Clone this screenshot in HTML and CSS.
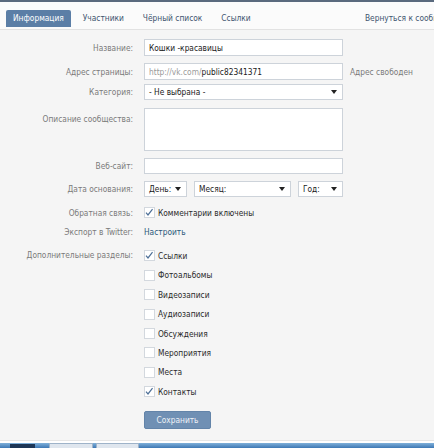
FILE: index.html
```html
<!DOCTYPE html>
<html lang="ru">
<head>
<meta charset="utf-8">
<title>Информация</title>
<link rel="stylesheet" href="styles.css">
</head>
<body>
<div class="topline"></div>
<div class="tabbar">
  <nav class="tabs">
    <span class="tab active">Информация</span>
    <span class="tab">Участники</span>
    <span class="tab">Чёрный список</span>
    <span class="tab">Ссылки</span>
  </nav>
  <div class="back">Вернуться к сообществу</div>
</div>
<main class="form">
  <div class="row r-name">
    <div class="lbl">Название:</div>
    <div class="ctl"><div class="input">Кошки -красавицы</div></div>
  </div>
  <div class="row r-addr">
    <div class="lbl">Адрес страницы:</div>
    <div class="ctl"><div class="input"><span class="muted">http://vk.com/</span>public82341371</div></div>
    <div class="note">Адрес свободен</div>
  </div>
  <div class="row r-cat">
    <div class="lbl">Категория:</div>
    <div class="ctl"><div class="select"><span>- Не выбрана -</span><i class="arrow"></i></div></div>
  </div>
  <div class="row r-desc">
    <div class="lbl top">Описание сообщества:</div>
    <div class="ctl"><div class="textarea"></div></div>
  </div>
  <div class="row r-site">
    <div class="lbl">Веб-сайт:</div>
    <div class="ctl"><div class="input"></div></div>
  </div>
  <div class="row r-date">
    <div class="lbl">Дата основания:</div>
    <div class="ctl dates">
      <div class="select day"><span>День:</span><i class="arrow"></i></div>
      <div class="select month"><span>Месяц:</span><i class="arrow"></i></div>
      <div class="select year"><span>Год:</span><i class="arrow"></i></div>
    </div>
  </div>
  <div class="row r-fb">
    <div class="lbl">Обратная связь:</div>
    <div class="ctl">
      <div class="check"><span class="box on"><svg viewBox="0 0 11 11"><path d="M2.2 5.6 L4.4 8.2 L9.4 1.8"/></svg></span>Комментарии включены</div>
    </div>
  </div>
  <div class="row r-tw">
    <div class="lbl">Экспорт в Twitter:</div>
    <div class="ctl"><span class="link">Настроить</span></div>
  </div>
  <div class="row r-extra">
    <div class="lbl item-h">Дополнительные разделы:</div>
    <div class="ctl list">
      <div class="check item"><span class="box on"><svg viewBox="0 0 11 11"><path d="M2.2 5.6 L4.4 8.2 L9.4 1.8"/></svg></span>Ссылки</div>
      <div class="check item"><span class="box"></span>Фотоальбомы</div>
      <div class="check item"><span class="box"></span>Видеозаписи</div>
      <div class="check item"><span class="box"></span>Аудиозаписи</div>
      <div class="check item"><span class="box"></span>Обсуждения</div>
      <div class="check item"><span class="box"></span>Мероприятия</div>
      <div class="check item"><span class="box"></span>Места</div>
      <div class="check item"><span class="box on"><svg viewBox="0 0 11 11"><path d="M2.2 5.6 L4.4 8.2 L9.4 1.8"/></svg></span>Контакты</div>
    </div>
  </div>
  <div class="row r-save">
    <div class="lbl"></div>
    <div class="ctl"><div class="button">Сохранить</div></div>
  </div>
</main>
<footer class="taskbar">
  <span class="start"></span>
  <span class="task"></span>
  <span class="task"></span>
</footer>
</body>
</html>
```
FILE: styles.css
```css
html, body {
  margin: 0;
  padding: 0;
}
body {
  width: 434px;
  height: 448px;
  overflow: hidden;
  background: #f5f5f5;
  font-family: "DejaVu Sans Condensed", "DejaVu Sans", sans-serif;
  font-stretch: condensed;
  font-size: 8.3px;
  color: #222;
}
.topline {
  height: 2px;
  background: #5a6a7e;
}
.tabbar {
  display: grid;
  grid-template-columns: 365px 1fr;
  align-items: end;
  height: 28px;
  box-sizing: border-box;
  padding: 8px 0 2px 0;
  background: #fbfbfb;
  border-bottom: 1px solid #e2e2e2;
}
.tabs {
  display: flex;
  gap: 5px;
  padding-left: 6px;
}
.tab {
  height: 17px;
  line-height: 17px;
  padding: 0 7px;
  color: #40546f;
  white-space: nowrap;
}
.tab.active {
  background: #5b7ea6;
  color: #fff;
  border-radius: 2px 2px 0 0;
}
.back {
  height: 17px;
  line-height: 17px;
  white-space: nowrap;
  overflow: hidden;
  color: #40546f;
}
.form {
  padding: 9px 0 0 0;
  height: 410px;
  box-sizing: border-box;
}
.row {
  display: flex;
  align-items: center;
}
.lbl {
  width: 133px;
  flex: none;
  text-align: right;
  color: #7a7a7a;
  white-space: nowrap;
}
.lbl.top {
  align-self: flex-start;
  padding-top: 6px;
}
.lbl.item-h {
  align-self: flex-start;
  line-height: 19.4px;
}
.ctl {
  margin-left: 11px;
  width: 199px;
  flex: none;
}
.note {
  margin-left: 7px;
  color: #7a7a7a;
  white-space: nowrap;
}
.input, .select, .textarea {
  box-sizing: border-box;
  background: #fff;
  border: 1px solid #cdd3da;
  height: 17px;
  padding: 0 4px;
  display: flex;
  align-items: center;
  white-space: nowrap;
  color: #1a1a1a;
}
.muted { color: #9a9a9a; }
.select {
  height: 16px;
  justify-content: space-between;
  padding: 0 5px 0 4px;
}
.arrow {
  width: 0;
  height: 0;
  border-left: 3px solid transparent;
  border-right: 3px solid transparent;
  border-top: 4px solid #222;
}
.textarea { height: 43px; }
.r-addr { margin-top: 7px; }
.r-cat { margin-top: 4px; }
.r-desc { margin-top: 8px; }
.r-site { margin-top: 7px; }
.r-site .input { height: 16px; }
.r-date { margin-top: 7px; }
.dates {
  display: flex;
  gap: 7px;
}
.day { width: 43px; }
.month { width: 97px; }
.year { width: 45px; }
.r-fb { margin-top: 9.5px; height: 12px; }
.r-tw { margin-top: 7.5px; height: 12px; }
.r-extra { margin-top: 8.3px; align-items: flex-start; }
.list {
  display: flex;
  flex-direction: column;
}
.check {
  display: flex;
  align-items: center;
  color: #2a2a2a;
  white-space: nowrap;
}
.check.item { height: 19.4px; }
.box {
  width: 11px;
  height: 11px;
  box-sizing: border-box;
  background: #fff;
  border: 1px solid #d3d8de;
  margin-right: 3px;
  flex: none;
  display: flex;
}
.box svg {
  width: 11px;
  height: 11px;
  margin: -1px 0 0 -1px;
  fill: none;
  stroke: #4d6f97;
  stroke-width: 1.3;
}
.link { color: #2b587a; }
.r-save { margin-top: 9.5px; }
.button {
  width: 67px;
  height: 18px;
  box-sizing: border-box;
  background: #7090b4;
  border: 1px solid #6384a9;
  border-radius: 2px;
  color: #eef2f7;
  display: flex;
  align-items: center;
  justify-content: center;
}
.taskbar {
  border-top: 1px solid #e6e6e6;
  height: 8px;
  box-sizing: border-box;
  background: linear-gradient(#ffffff 0 2px, #7fb0da 2px, #3e78b4 7px);
  display: flex;
  align-items: flex-start;
}
.start {
  margin: 3px 0 0 10px;
  width: 25px;
  height: 5px;
  background: #1d3656;
}
.task {
  margin-top: 2px;
  height: 6px;
  width: 44px;
  box-sizing: border-box;
  border: 1px solid #9eb3c9;
  background: #dfe6ee;
}
.start + .task { margin-left: 14px; }
.task + .task { margin-left: 3px; width: 43px; }
```
